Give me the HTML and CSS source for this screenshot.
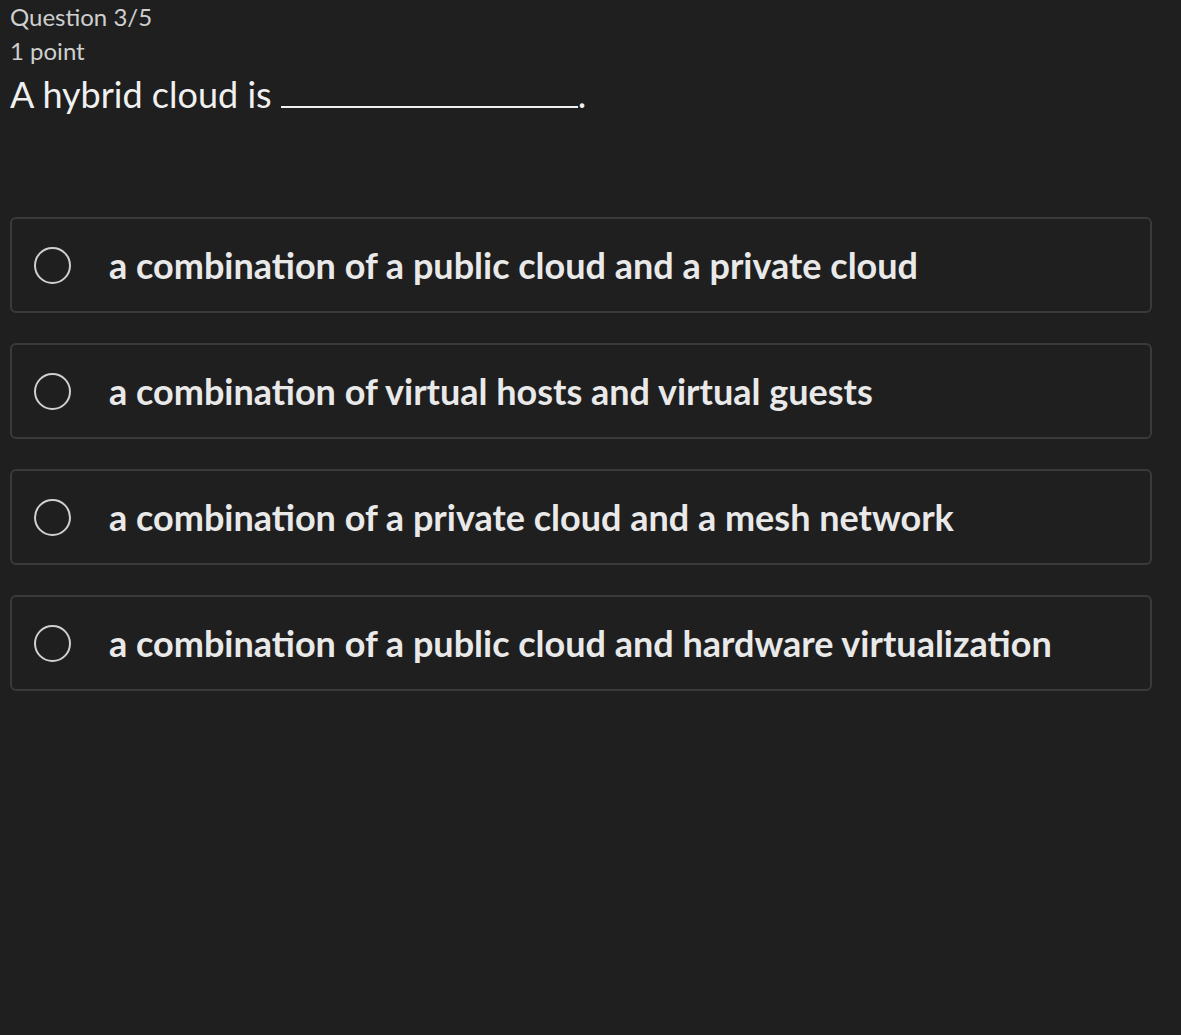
FILE: index.html
```html
<!DOCTYPE html>
<html lang="en">
<head>
    <meta charset="UTF-8">
    <meta name="viewport" content="width=device-width, initial-scale=1.0">
    <title>Question 3/5</title>
    <link rel="stylesheet" href="styles.css">
</head>
<body>
    <div class="quiz">
        <div class="meta">Question 3/5</div>
        <div class="meta">1 point</div>
        <h1 class="question">A hybrid cloud is <span class="blank"></span>.</h1>

        <div class="options">
            <label class="option">
                <span class="radio"></span>
                <span class="text">a combination of a public cloud and a private cloud</span>
            </label>
            <label class="option">
                <span class="radio"></span>
                <span class="text">a combination of virtual hosts and virtual guests</span>
            </label>
            <label class="option">
                <span class="radio"></span>
                <span class="text">a combination of a private cloud and a mesh network</span>
            </label>
            <label class="option">
                <span class="radio"></span>
                <span class="text">a combination of a public cloud and hardware virtualization</span>
            </label>
        </div>
    </div>
</body>
</html>
```

FILE: styles.css
```css
body {
    margin: 0;
    background-color: #1f1f1f;
    font-family: Lato, "Open Sans", sans-serif;
    color: #e6e6e6;
}
.quiz {
    padding: 0 29px 0 10px;
}
.meta {
    font-size: 24px;
    line-height: 34px;
    color: #cfcfcf;
}
.question {
    margin: 0;
    font-size: 36px;
    font-weight: 400;
    line-height: 52px;
    color: #f0f0f0;
}
.blank {
    display: inline-block;
    width: 297px;
    border-bottom: 2px solid #f0f0f0;
}
.options {
    display: flex;
    flex-direction: column;
    gap: 30px;
    margin-top: 97px;
}
.option {
    display: flex;
    align-items: center;
    height: 92px;
    border: 2px solid #3a3a3a;
    border-radius: 6px;
    cursor: pointer;
}
.radio {
    width: 33px;
    height: 33px;
    margin: 0 38px 0 22px;
    border: 2px solid #cfcfcf;
    border-radius: 50%;
    flex-shrink: 0;
}
.text {
    font-size: 36px;
    font-weight: 700;
    color: #e9e9e9;
}
```
